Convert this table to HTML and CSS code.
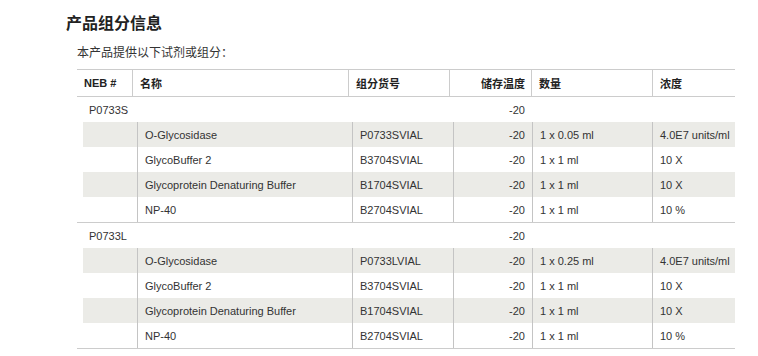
FILE: index.html
```html
<!DOCTYPE html>
<html lang="zh-CN">
<head>
<meta charset="utf-8">
<title>产品组分信息</title>
<link rel="stylesheet" href="styles.css">
</head>
<body>
<div class="page">
  <h1 class="title">产品组分信息</h1>
  <p class="intro">本产品提供以下试剂或组分：</p>
  <table class="components">
    <colgroup>
      <col class="c-neb"><col class="c-name"><col class="c-sku"><col class="c-temp"><col class="c-qty"><col class="c-conc">
    </colgroup>
    <thead>
      <tr>
        <th>NEB #</th>
        <th>名称</th>
        <th>组分货号</th>
        <th class="num">储存温度</th>
        <th>数量</th>
        <th>浓度</th>
      </tr>
    </thead>
    <tbody>
      <tr class="group-row">
        <td class="neb">P0733S</td><td></td><td></td><td class="num">-20</td><td></td><td></td>
      </tr>
      <tr>
        <td colspan="6" class="nested">
          <table class="items">
            <colgroup>
              <col class="i-neb"><col class="i-name"><col class="i-sku"><col class="i-temp"><col class="i-qty"><col class="i-conc">
            </colgroup>
            <tbody>
              <tr><td></td><td>O-Glycosidase</td><td>P0733SVIAL</td><td class="num">-20</td><td>1 x 0.05 ml</td><td>4.0E7 units/ml</td></tr>
              <tr><td></td><td>GlycoBuffer 2</td><td>B3704SVIAL</td><td class="num">-20</td><td>1 x 1 ml</td><td>10 X</td></tr>
              <tr><td></td><td>Glycoprotein Denaturing Buffer</td><td>B1704SVIAL</td><td class="num">-20</td><td>1 x 1 ml</td><td>10 X</td></tr>
              <tr><td></td><td>NP-40</td><td>B2704SVIAL</td><td class="num">-20</td><td>1 x 1 ml</td><td>10 %</td></tr>
            </tbody>
          </table>
        </td>
      </tr>
      <tr class="group-row">
        <td class="neb">P0733L</td><td></td><td></td><td class="num">-20</td><td></td><td></td>
      </tr>
      <tr>
        <td colspan="6" class="nested">
          <table class="items">
            <colgroup>
              <col class="i-neb"><col class="i-name"><col class="i-sku"><col class="i-temp"><col class="i-qty"><col class="i-conc">
            </colgroup>
            <tbody>
              <tr><td></td><td>O-Glycosidase</td><td>P0733LVIAL</td><td class="num">-20</td><td>1 x 0.25 ml</td><td>4.0E7 units/ml</td></tr>
              <tr><td></td><td>GlycoBuffer 2</td><td>B3704SVIAL</td><td class="num">-20</td><td>1 x 1 ml</td><td>10 X</td></tr>
              <tr><td></td><td>Glycoprotein Denaturing Buffer</td><td>B1704SVIAL</td><td class="num">-20</td><td>1 x 1 ml</td><td>10 X</td></tr>
              <tr><td></td><td>NP-40</td><td>B2704SVIAL</td><td class="num">-20</td><td>1 x 1 ml</td><td>10 %</td></tr>
            </tbody>
          </table>
        </td>
      </tr>
    </tbody>
  </table>
</div>
</body>
</html>
```
FILE: styles.css
```css
* { box-sizing: border-box; }

html, body {
  margin: 0;
  padding: 0;
  background: #fff;
}

body {
  font-family: "Liberation Sans", Arial, "Noto Sans CJK SC", sans-serif;
  color: #333;
  font-size: 11px;
}

.page {
  padding: 10px 23px 0 77px;
}

.title {
  margin: 0 0 0 -11px;
  font-family: "Noto Sans CJK SC", sans-serif;
  font-size: 16px;
  line-height: 25px;
  font-weight: bold;
  color: #222;
}

.intro {
  margin: 8px 0 8px 0;
  font-family: "Noto Sans CJK SC", sans-serif;
  font-size: 12px;
  line-height: 18px;
  color: #333;
}

table {
  border-collapse: separate;
  border-spacing: 0;
  table-layout: fixed;
}

.components {
  width: 658px;
  border-top: 1px solid #ccc;
}

.c-neb { width: 55px; }
.c-name { width: 216px; }
.c-sku { width: 101px; }
.c-temp { width: 82px; }
.c-qty { width: 121px; }
.c-conc { width: 83px; }

.components th {
  height: 27px;
  padding: 0 7px;
  text-align: left;
  font-family: "Liberation Sans", "Noto Sans CJK SC", sans-serif;
  font-weight: bold;
  font-size: 11px;
  color: #222;
  border-bottom: 1px solid #ccc;
  border-left: 1px solid #ccc;
  white-space: nowrap;
}

.components th:first-child { border-left: none; }

.components th.num { text-align: right; padding-right: 6px; }

.group-row td {
  height: 25px;
  padding: 0 6px;
  vertical-align: middle;
}

.group-row td.neb { padding-left: 12px; }
.group-row td.num { text-align: right; }

.nested {
  padding: 0 0 0 6px;
  border-bottom: 1px solid #ccc;
}

.items {
  width: 652px;
}

.i-neb { width: 54px; }
.i-name { width: 215px; }
.i-sku { width: 101px; }
.i-temp { width: 79px; }
.i-qty { width: 120px; }
.i-conc { width: 83px; }

.items td {
  height: 25px;
  padding: 0 7px;
  border-left: 1px solid #c4c4c4;
  white-space: nowrap;
  vertical-align: middle;
}

.items td:first-child { border-left: none; }
.items td.num { text-align: right; }

.items tr:nth-child(odd) td { background: #ebebe7; }
```
